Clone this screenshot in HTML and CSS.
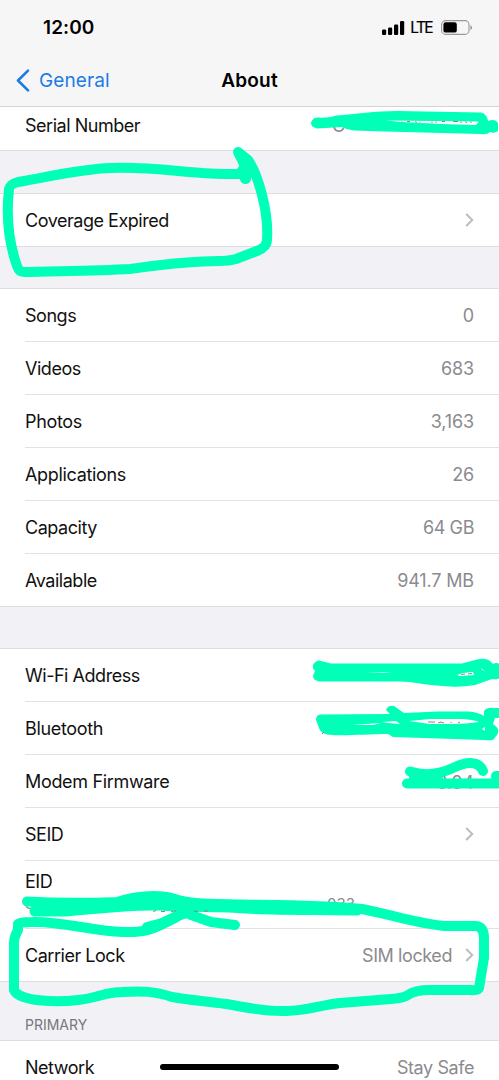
FILE: index.html
```html
<!DOCTYPE html>
<html lang="en">
<head>
<meta charset="utf-8">
<title>About</title>
<link rel="stylesheet" href="styles.css">
</head>
<body>
<main class="phone">
  <header class="top">
    <div class="status">
      <span class="time">12:00</span>
      <div class="indicators">
        <svg class="signal" width="22" height="14" viewBox="0 0 22 14"><rect x="0" y="8.5" width="4.2" height="5.5" rx="1.2"/><rect x="6" y="6.5" width="4.2" height="7.5" rx="1.2"/><rect x="12" y="3.5" width="4.2" height="10.5" rx="1.2"/><rect x="18" y="0" width="4.2" height="14" rx="1.2"/></svg>
        <span class="lte">LTE</span>
        <svg class="battery" width="32" height="15" viewBox="0 0 32 15"><rect x=".6" y=".6" width="27.4" height="13.8" rx="4" fill="none" stroke="#999" stroke-width="1.1"/><rect x="2.4" y="2.2" width="13.4" height="10.4" rx="2.2"/><path d="M29.4 5.2c2.2.8 2.2 4 0 4.8z" fill="#999"/></svg>
      </div>
    </div>
    <nav class="nav">
      <span class="back"><svg width="14" height="23" viewBox="0 0 14 23"><path d="M12 1.6 2 11.5l10 9.9" fill="none" stroke="#1c7be6" stroke-width="2.6" stroke-linecap="round" stroke-linejoin="round"/></svg><span class="back-label">General</span></span>
      <h1 class="title">About</h1>
      <span></span>
    </nav>
  </header>

  <section class="group first">
    <div class="row serial"><span class="label">Serial Number</span><span class="value remnant">C</span></div>
  </section>
  <section class="group">
    <div class="row"><span class="label">Coverage Expired</span><svg class="chevron" width="9" height="14" viewBox="0 0 9 14"><path d="m1.2 1 6 6-6 6"/></svg></div>
  </section>
  <section class="group">
    <div class="row"><span class="label">Songs</span><span class="value">0</span></div>
    <div class="row"><span class="label">Videos</span><span class="value">683</span></div>
    <div class="row"><span class="label loose">Photos</span><span class="value">3,163</span></div>
    <div class="row"><span class="label loose">Applications</span><span class="value">26</span></div>
    <div class="row"><span class="label">Capacity</span><span class="value text">64 GB</span></div>
    <div class="row"><span class="label">Available</span><span class="value">941.7 MB</span></div>
  </section>
  <section class="group">
    <div class="row"><span class="label">Wi-Fi Address</span><span class="value"></span></div>
    <div class="row"><span class="label loose">Bluetooth</span><span class="value bt">70:4</span></div>
    <div class="row"><span class="label loose">Modem Firmware</span><span class="value modem">3.04</span></div>
    <div class="row"><span class="label">SEID</span><svg class="chevron" width="9" height="14" viewBox="0 0 9 14"><path d="m1.2 1 6 6-6 6"/></svg></div>
    <div class="row eid"><span class="label">EID</span><span class="eid-value"><span>8</span><span>033</span></span></div>
    <div class="row"><span class="label">Carrier Lock</span><span class="value text with-chevron">SIM locked<svg class="chevron" width="9" height="14" viewBox="0 0 9 14"><path d="m1.2 1 6 6-6 6"/></svg></span></div>
  </section>
  <h2 class="section-title">PRIMARY</h2>
  <section class="group last">
    <div class="row"><span class="label">Network</span><span class="value text">Stay Safe</span></div>
  </section>

  <div class="home-bar"></div>

  <svg class="ink" width="499" height="1080" viewBox="0 0 499 1080">
    <!-- serial number -->
    <path class="fill" d="M317 117.500C326 118 333 117 336 115.500C356 114 375 111 397 111L481 112.500Q487 114 488 121Q495 118 498 123V131Q494 134 490 132Q487 135 480 134L385 131.500L354 130.500Q347 130 342 127L317 128.500Q311 127 311 123Q312 118 317 117.500Z"/>
    <path class="gap" d="M386 120.500 479 121.500 476 125 448 124.300 402 122Z"/>
    <path class="bit" d="M402 121.500v1m5-1h3m5 0 2 1m3-1v1m12-1v1.500m4-1.500v1.500m6-1.500h3m8 0h5m3 0v1.500m4-1.500 2 1.500m4-1.500v1.500"/>
    <!-- coverage -->
    <path class="pen" d="M246 179V168L238 152L248 160C258 174 269 212 267 240Q267 247 257 251L236 259Q229 261 219 261C184 261 153 266 130 269C95 271 55 271 24 272Q19 272 17 266C9 243 6 216 9 189Q10 184 18 182C48 177 79 169 111 168C152 166 190 174 224 174H246"/>
    <path class="pen" d="M240 155 245 161V179M240 173 246 166"/>
    <!-- wi-fi -->
    <path class="fill" d="M319 660.500 331 663.500H462L477 659.500Q488 657 493 664Q496 662 500 664V678Q496 680 492 679L475 685Q458 688 443 686C425 685 411 681 397 681.500H319Q313 680 313 676L315 671Q312 668 313 665Q315 661 319 660.500Z"/>
    <path class="gap" d="m457 675 6-2 10-1 1 3-14 1zM481 668l4 3-3-1zM366 673l26-1-8 1z"/>
    <path class="bit" d="M461 674.500l4-.5m3 0 4-.5"/>
    <!-- bluetooth -->
    <path class="fill" d="M320 714.500 390 714 386 710Q388 705 394 706L404 713 438 711.500H469Q478 712 484 716L484 711Q487 707 493 708H500V718H495L493 724Q501 729 497 735L493 740Q489 740.500 484 740L393 737 388 734C366 734 347 736 332 735Q321 735 319 728L316 720Q316 715 320 714.500Z"/>
    <path class="gap" d="M409 721 431 719H462Q475 720 479 722Q466 724 454 724H430ZM382 722l14-1 4 3-12-1zM351 725l30-2-8 2zM482 729l3-2v4z"/>
    <path class="bit" d="M428 722h7m3 1q3-2 6 0m7 0v-1m7 1 2-1M322 734l2-2"/>
    <!-- modem -->
    <path class="pen" d="M410 771.500Q424 776 438 773C452 771 458 763 470 763Q480 763 483 771M407 783.500H500M414 778H438"/>
    <path class="pen" d="M496 776H501V783H494"/>
    <!-- EID and carrier lock -->
    <path class="pen" d="M27 901.500C52 903 91 903 117 902C132 897 156 893 175 899C190 904 208 904 241 904.500C275 905 325 905 362 909C389 914 414 923 444 926H476Q484 927 484 938V958L479 988Q478 991 470 990H430Q415 990 408 995Q404 998 391 999L340 1003C321 1005 307 1011 286 1011C264 1012 244 1007 226 1004C203 1001 189 1000 172 997C154 991 143 991 122 992C104 992 98 998 78 1000C56 1003 18 1001 14 990V943Q14 937 18 930V924Q20 922 32 922C62 921 90 931 123 932C149 933 156 927 175 918Q186 911 191 915L211 922 235 925"/>
    <path class="pen wide" d="M35 911H64C100 908 130 904 158 905C195 907 221 906 245 908C278 910 322 909 357 910"/>
    <path class="pen" d="M147 927 162 923 185 912"/>
    <path class="bit" d="M153 911.500l3-1m5 1h4m6 0q3 1 5-1m18 .8h4m6 0 4-.5"/>
  </svg>
</main>
</body>
</html>
```
FILE: styles.css
```css
* { box-sizing: border-box; }
body { margin: 0; background: #f1f1f6; }
.phone {
  position: relative;
  width: 499px;
  height: 1080px;
  overflow: hidden;
  background: #f1f1f6;
  font-family: Inter, "Liberation Sans", sans-serif;
  font-size: 18px;
  color: #111;
}
.top {
  height: 107px;
  background: #f6f6f6;
  border-bottom: 1px solid #d4d4d6;
}
.status {
  display: flex;
  justify-content: space-between;
  align-items: center;
  height: 54px;
  padding: 1px 26px 0 43px;
}
.time { font-size: 19px; font-weight: 600; color: #000; letter-spacing: .1px; }
.indicators { display: flex; align-items: center; }
.signal { overflow: visible; }
.lte { font-size: 15.5px; font-weight: 400; margin: 0 9px 0 6px; letter-spacing: -1.6px; color: #000; -webkit-text-stroke: .2px #000; }
.nav {
  display: grid;
  grid-template-columns: 1fr auto 1fr;
  align-items: center;
  height: 52px;
  padding: 0 16px;
}
.back { display: flex; align-items: center; gap: 9px; color: #1c7be6; }
.back-label { font-size: 19px; letter-spacing: .1px; }
.title { margin: 0; font-size: 19px; font-weight: 600; letter-spacing: .2px; color: #000; }
.group {
  margin-bottom: 41px;
  background: #fff;
  border-top: 1px solid #dedee1;
  border-bottom: 1px solid #dedee1;
}
.group.first { margin-bottom: 42px; border-top: 0; }
.row {
  position: relative;
  display: flex;
  align-items: center;
  justify-content: space-between;
  height: 53px;
  margin-left: 25px;
  padding-right: 25px;
  border-bottom: 1px solid #e2e2e4;
}
.row:last-child { height: 52px; border-bottom: 0; }
.row.serial { height: 43px; padding-bottom: 7px; }
.label { letter-spacing: -.47px; }
.loose { letter-spacing: -.33px; }
.value { color: #8b8b8f; letter-spacing: -.15px; }
.text { letter-spacing: -.42px; }
.remnant { padding-right: 129px; }
.bt { padding-right: 10px; }
.modem { padding-top: 2px; }
.chevron { fill: none; stroke: #bdbdc1; stroke-width: 2; }
.with-chevron { display: flex; align-items: center; gap: 13px; }
.row.eid {
  height: 68px;
  flex-direction: column;
  align-items: flex-start;
  justify-content: flex-start;
  padding-top: 10px;
}
.eid-value {
  display: flex;
  justify-content: space-between;
  width: 330px;
  margin-top: 3px;
  font-size: 15px;
  line-height: 18px;
  color: #8b8b8f;
}
.section-title {
  height: 58px;
  margin: -41px 0 0;
  padding: 34px 25px 0;
  font-size: 14px;
  font-weight: 400;
  line-height: 18px;
  color: #77777c;
}
.last { margin-bottom: 0; }
.home-bar {
  position: absolute;
  left: 160px;
  top: 1064px;
  width: 179px;
  height: 6px;
  border-radius: 3px;
  background: #000;
}
.ink { position: absolute; left: 0; top: 0; }
.fill { fill: #00ffb7; }
.gap { fill: #fff; }
.pen { fill: none; stroke: #00ffb7; stroke-width: 10; stroke-linecap: round; stroke-linejoin: round; }
.wide { stroke-width: 11; }
.bit { fill: none; stroke: #888; stroke-width: 1; }
```
